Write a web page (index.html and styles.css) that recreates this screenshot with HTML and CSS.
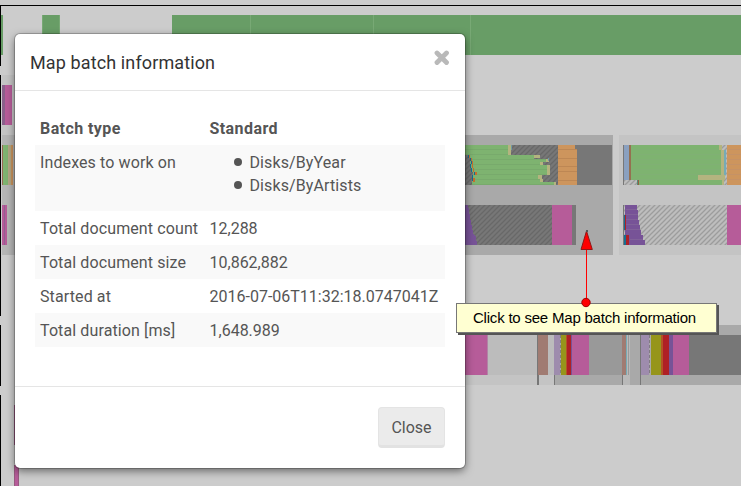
FILE: index.html
```html
<!DOCTYPE html>
<html lang="en">
<head>
<meta charset="utf-8">
<title>Map batch information</title>
<link rel="stylesheet" href="styles.css">
</head>
<body>
<svg class="timeline" width="741" height="486" viewBox="0 0 741 486" shape-rendering="crispEdges" aria-hidden="true">
  <defs>
    <pattern id="dark" width="5" height="5" patternUnits="userSpaceOnUse"><path fill="#777" d="M0 0h5v5H0z"/><path d="M-1 6 6-1M-1 1 1-1M4 6 6 4" stroke="#686868" stroke-width="1.3" shape-rendering="auto"/></pattern>
    <pattern id="light" width="5" height="5" patternUnits="userSpaceOnUse"><path fill="#bdbdbd" d="M0 0h5v5H0z"/><path d="M-1 6 6-1M-1 1 1-1M4 6 6 4" stroke="#9c9c9c" stroke-width="1.3" shape-rendering="auto"/></pattern>
    <pattern id="rows" y="145" width="10" height="5" patternUnits="userSpaceOnUse"><path fill="#7eb370" d="M0 0h10v5H0z"/><path fill="#78aa6c" d="M0 4h10v1H0z"/></pattern>
    <pattern id="faint" y="145" width="10" height="5" patternUnits="userSpaceOnUse"><path fill="#7eb370" d="M0 0h10v5H0z"/><path fill="#80b074" d="M0 4h10v1H0z"/></pattern>
  </defs>
  <path fill="#ccc" d="M0 0h741v486H0z"/>
  <path d="M0 5h741v1H0zM0 5h1v61H0zM0 75h1v241H0zM0 325h1v61H0zM0 395h1v91H0z"/>
  <!-- first lane -->
  <path fill="#689d66" d="M1 15h2v40H1zM43 15h17v40H43zM172 15h569v40H172z"/>
  <path fill="#78a975" d="M42 15h1v40h-1zM59 15h1v40h-1zM250 15h1v40h-1zM373 15h1v40h-1zM470 15h1v40h-1z"/>
  <!-- left strip -->
  <path fill="#c4c4c4" d="M2 75h13v60H2z"/><path fill="#8a608b" d="M2 85h3v40H2z"/><path fill="#b65c99" d="M5 85h7v40H5z"/>
  <path fill="#b5b5b5" d="M2 135h13v120H2z"/><path fill="#986a54" d="M2 145h1v40H2z"/><path fill="#7eb370" d="M3 145h5v40H3z"/><path fill="#b3a784" d="M8 145h3v40H8z"/><path fill="#c9935d" d="M11 145h2v40h-2z"/>
  <path fill="#b65c99" d="M2 205h5v40H2z"/><path fill="#906090" d="M4 205h1v40H4z"/>
  <path fill="#985980" d="M14 405h2v40h-2zM14 465h5v21h-5z"/><path fill="#b65c99" d="M15 465h3v21h-3z"/>
  <!-- middle batch -->
  <path fill="#a9a9a9" d="M465 135h148v120H465z"/>
  <path fill="#777" d="M558 145h54v40h-54zM572 205h4v40h-4z"/>
  <path fill="url(#dark)" d="M465 145h93v40h-93zM465 205h87v40h-87z"/>
  <path fill="url(#rows)" d="M465 145h44v10h25v4h12v3h-5v3h8v10h-9v7h15v3h-84v-5h2v-5h-2v-8h-3v-7h-3z"/>
  <path fill="url(#dark)" d="M465 155h3v3h2v6h1v8h2v9h-1v4h-7z"/>
  <path fill="#b4b47f" d="M508 145h3v10h-3zM534 155h6v3h-6zM546 159h3v3h-3zM540 162h3v3h-3zM547 165h3v10h-3zM538 175h4v4h-4zM540 179h3v3h-3zM554 182h2v3h-2z"/>
  <path fill="#7199a6" d="M511 145h1v5h-1zM548 158h1v3h-1z"/>
  <path fill="#176e92" d="M468 155h1v3h-1zM470 158h1v3h-1zM471 161h1v3h-1zM470 164h1v4h-1zM471 168h1v4h-1zM474 172h1v3h-1zM472 175h1v6h-1z"/>
  <path fill="#c66e2d" d="M469 155h1v3h-1zM471 158h1v3h-1zM472 161h1v7h-1zM473 168h1v4h-1zM475 172h2v3h-2zM473 178h2v4h-2z"/>
  <path fill="#cd955d" d="M558 145h17v4h2v36h-19z"/><path fill="#bd8754" d="M558 149h19v1h-19zM558 158h19v1h-19zM558 166h19v1h-19zM558 171h19v1h-19zM558 180h19v1h-19z"/>
  <path fill="#775397" d="M465 205h3l2 12 3 16 3 4 1 8h-12z"/>
  <path fill="#b65c99" d="M552 205h20v40h-20z"/>
  <!-- right batch -->
  <path fill="#c4c4c4" d="M619 135h122v120H619z"/>
  <path fill="#777" d="M623 145h1v40h-1zM623 205h1v40h-1z"/>
  <path fill="url(#light)" d="M624 145h104v40H624zM624 205h103v40H624z"/>
  <path fill="#8aa0bf" d="M624 145h5v35h-5z"/><path fill="#957050" d="M629 145h2v35h-2z"/>
  <path fill="url(#faint)" d="M631 145h90v5h2v35h-84v-5h-8z"/><path fill="#568c78" d="M637 180h1v5h-1z"/><path fill="#955f40" d="M638 180h1v5h-1z"/>
  <path fill="#b4b47f" d="M719 145h3v5h-3zM721 150h3v25h1v5h-1v5h-2v-5h-24v-5h23z"/>
  <path fill="#76abb5" d="M724 150h2v25h-2z"/>
  <path fill="#cd955d" d="M727 145h14v40h-14z"/><path fill="#c59266" d="M728 149h13v1h-13zM728 154h13v1h-13zM728 159h13v1h-13zM728 164h13v1h-13zM728 169h13v1h-13zM728 174h13v1h-13zM728 179h13v1h-13z"/>
  <path fill="#775397" d="M625 205h12v5h1v10h1v5h1v5h1v5h2v5h2v5h-20z"/><path stroke="#806199" d="M626 209.500h11M626 214.500h12M626 219.500h12M626 224.500h13M626 229.500h14M630 239.500h13"/>
  <path fill="#176e92" d="M624 215h1v15h-1zM624 235h2v10h-2z"/><path fill="#ad2027" d="M625 215h1v15h-1zM626 235h3v10h-3z"/>
  <path fill="#b65c99" d="M727 205h14v40h-14z"/>
  <!-- lower batch -->
  <path fill="#c4c4c4" d="M465 325h89v60h-89z"/><path fill="#a9a9a9" d="M554 325h187v60H554z"/><path fill="#b9b9b9" d="M623 325h7v60h-7z"/>
  <path fill="#bcbcbc" d="M488 335h66v40h-66z"/>
  <path fill="#777" d="M537 325h2v60h-2zM554 325h1v60h-1zM622 325h1v60h-1zM640 325h1v60h-1z"/>
  <path fill="#a07b72" d="M538 335h10v40h-10zM622 335h4v40h-4z"/>
  <path fill="#9e8cad" d="M554 335h6v40h-6zM641 335h8v40h-8z"/><path stroke="#817b83" stroke-dasharray="3 2" d="M560.500 335v40M649.500 335v40"/>
  <path fill="#96951b" d="M561 335h5v40h-5zM651 335h10v40h-10z"/>
  <path fill="#b25426" d="M566 335h1v40h-1zM661 335h2v40h-2z"/><path fill="#af2025" d="M567 335h4v40h-4zM663 335h6v40h-6z"/>
  <path fill="#775397" d="M571 335h1v40h-1zM669 335h4v40h-4z"/>
  <path fill="#b65c99" d="M465 335h22v40h-22zM572 335h17v40h-17zM673 335h16v40h-16z"/><path fill="#b184a5" d="M487 335h1v40h-1z"/>
  <path fill="#999" d="M589 335h33v40h-33zM628 335h1v40h-1z"/><path fill="#76abb5" d="M626 335h1v40h-1z"/>
  <path fill="#777" d="M689 335h52v40h-52z"/>
</svg>

<section class="modal" role="dialog" aria-labelledby="heading">
  <header class="modal-header">
    <h1 id="heading">Map batch information</h1>
    <button class="dismiss" aria-label="Close"><svg width="16" height="16" viewBox="0 0 16 16"><path d="M3 3 12.500 12.500M12.500 3 3 12.500" stroke="#b9b9b9" stroke-width="4.800" stroke-linecap="round"/></svg></button>
  </header>
  <div class="modal-body">
    <table>
      <tbody>
        <tr><th>Batch type</th><th>Standard</th></tr>
        <tr><td>Indexes to work on</td><td><ul><li>Disks/ByYear</li><li>Disks/ByArtists</li></ul></td></tr>
        <tr><td>Total document count</td><td class="value">12,288</td></tr>
        <tr><td>Total document size</td><td class="value">10,862,882</td></tr>
        <tr><td>Started at</td><td class="value">2016-07-06T11:32:18.0747041Z</td></tr>
        <tr><td>Total duration [ms]</td><td class="value">1,648.989</td></tr>
      </tbody>
    </table>
  </div>
  <footer class="modal-footer"><button class="btn">Close</button></footer>
</section>

<div class="callout">Click to see Map batch information</div>
<svg class="pointer" width="14" height="80" viewBox="0 0 14 80" aria-hidden="true">
  <path d="M6.500 18v55" stroke="red"/><path d="M6.500 2 12.300 20.500H1z" fill="red" stroke="#8f1717"/><path d="M6 1h2v2H6z" fill="#555"/><circle cx="6" cy="73.500" r="4.200" fill="red" stroke="#a00000"/>
</svg>
</body>
</html>
```
FILE: styles.css
```css
* { box-sizing: border-box; }
body {
  margin: 0;
  width: 741px;
  height: 486px;
  position: relative;
  overflow: hidden;
  background: #ccc;
  color: #555;
  font: 16px/22.85px Roboto, sans-serif;
}
.timeline { display: block; }
button { font: inherit; color: inherit; }
.modal {
  position: absolute;
  left: 15px;
  top: 34px;
  width: 450px;
  height: 434px;
  display: flex;
  flex-direction: column;
  background: #fff;
  border-radius: 5px;
  box-shadow: 0 0 0 1px rgba(0, 0, 0, .2), 0 3px 9px rgba(0, 0, 0, .5);
}
.modal-header {
  display: flex;
  justify-content: space-between;
  height: 57px;
  padding: 15px;
  border-bottom: 1px solid #e5e5e5;
}
h1 {
  margin: 0;
  color: #333;
  font-size: 18px;
  font-weight: 400;
  line-height: 27px;
  letter-spacing: .12px;
}
.dismiss {
  width: 16px;
  height: 16px;
  margin-top: 1px;
  padding: 0;
  border: 0;
  background: none;
}
.dismiss svg { display: block; }
.modal-body { flex: 1; padding: 20px; }
table {
  width: 410px;
  border-collapse: collapse;
  table-layout: fixed;
}
th, td {
  height: 34px;
  padding: 7px 5px 4px;
  text-align: left;
  vertical-align: top;
  white-space: nowrap;
  letter-spacing: .11px;
}
th { font-weight: 700; letter-spacing: .42px; }
th:first-child { width: 169px; }
.value { letter-spacing: 0; }
td:last-child, th:last-child { padding-left: 5.500px; }
tr:nth-child(even) { background: #f9f9f9; }
ul { margin: 0; padding: 0 0 9px 40px; list-style: none; }
li { position: relative; }
li::before {
  content: "";
  position: absolute;
  left: -16px;
  top: 6px;
  width: 8px;
  height: 8px;
  border-radius: 50%;
  background: #555;
}
.modal-footer {
  display: flex;
  justify-content: flex-end;
  height: 82px;
  padding: 20px;
  border-top: 1px solid #e5e5e5;
}
.btn {
  width: 67px;
  height: 41px;
  padding: 3px 0 0;
  background: #ebebeb;
  border: 1px solid #e4e4e4;
  border-bottom: 3px solid #e2e2e2;
  border-radius: 4px;
}
.callout {
  position: absolute;
  left: 456px;
  top: 303px;
  width: 261px;
  height: 30px;
  padding-left: 16px;
  background: #ffffd2;
  border: 1px solid #777;
  box-shadow: 2px 2px 0 #555;
  color: #000;
  font: 15px/28px "Liberation Sans", sans-serif;
  letter-spacing: -.21px;
  white-space: nowrap;
}
.pointer { position: absolute; left: 580px; top: 229px; }
```
